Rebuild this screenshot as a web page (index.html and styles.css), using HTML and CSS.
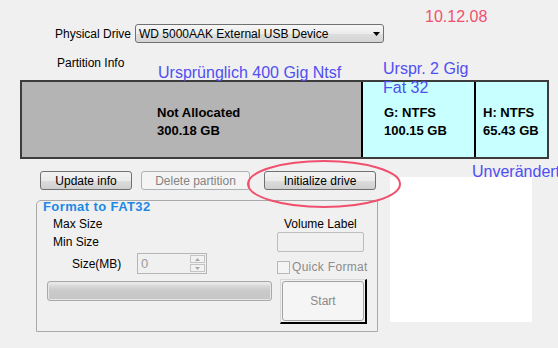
FILE: index.html
```html
<!DOCTYPE html>
<html>
<head>
<meta charset="utf-8">
<link rel="stylesheet" href="styles.css">
</head>
<body>
<div class="screen">
  <div class="dialog">
    <div class="drive-row">
      <span class="drive-label">Physical Drive</span>
      <div class="combo">
        <span class="combo-text">WD 5000AAK External USB Device</span>
        <svg class="combo-arrow" width="7" height="4" viewBox="0 0 7 4"><polygon points="0,0 7,0 3.5,4" fill="#000"/></svg>
      </div>
    </div>
    <div class="partition-label">Partition Info</div>
    <div class="partition-bar">
      <div class="cell cell-free"><div>Not Allocated</div><div>300.18 GB</div></div>
      <div class="cell cell-g"><div>G: NTFS</div><div>100.15 GB</div></div>
      <div class="cell cell-h"><div>H: NTFS</div><div>65.43 GB</div></div>
    </div>
    <div class="button-row">
      <button class="btn btn-update">Update info</button>
      <button class="btn btn-delete" disabled>Delete partition</button>
      <button class="btn btn-init">Initialize drive</button>
    </div>
    <div class="group">
      <div class="group-title">Format to FAT32</div>
      <div class="group-body">
        <div class="col-left">
          <div class="line">Max Size</div>
          <div class="line line-min">Min Size</div>
          <div class="size-row">
            <span class="size-label">Size(MB)</span>
            <div class="spinner">
              <span class="spin-value">0</span>
              <div class="spin-buttons">
                <div class="spin-btn"><svg width="5" height="3" viewBox="0 0 5 3"><polygon points="0,3 5,3 2.5,0" fill="#a8a8a8"/></svg></div>
                <div class="spin-btn"><svg width="5" height="3" viewBox="0 0 5 3"><polygon points="0,0 5,0 2.5,3" fill="#a8a8a8"/></svg></div>
              </div>
            </div>
          </div>
          <div class="progress"></div>
        </div>
        <div class="col-right">
          <div class="line vol-label">Volume Label</div>
          <div class="vol-input"></div>
          <div class="check-row">
            <span class="checkbox"></span>
            <span class="check-text">Quick Format</span>
          </div>
          <div class="start-btn"><div class="start-inner">Start</div></div>
        </div>
      </div>
    </div>
  </div>

  <div class="note note-date">10.12.08</div>
  <div class="note note-orig">Ursprünglich 400 Gig Ntsf</div>
  <div class="note note-urspr">Urspr. 2 Gig</div>
  <div class="note note-fat">Fat 32</div>
  <div class="note note-unv">Unverändert</div>
  <div class="white-box"></div>
  <svg class="ring" width="156" height="50" viewBox="0 0 156 50"><ellipse cx="78" cy="25" rx="76" ry="23" fill="none" stroke="#f0506e" stroke-width="2"/></svg>
</div>
</body>
</html>
```
FILE: styles.css
```css
* { box-sizing: border-box; }
html, body { margin: 0; padding: 0; }
body {
  background: #f0f0f0;
  font-family: "Liberation Sans", Arial, sans-serif;
  font-size: 12px;
  color: #000;
}
.screen {
  position: relative;
  width: 558px;
  height: 348px;
  overflow: hidden;
}
.dialog {
  padding-top: 24px;
}
.drive-row {
  display: flex;
  align-items: center;
  padding-left: 55px;
  height: 19px;
}
.drive-label {
  width: 80px;
  line-height: 14px;
}
.combo {
  width: 249px;
  height: 19px;
  border: 1px solid #707070;
  border-radius: 3px;
  background: linear-gradient(#f6f6f6 0%, #ececec 50%, #dedede 51%, #d4d4d4 100%);
  display: flex;
  align-items: center;
  padding-left: 3px;
  padding-right: 3px;
}
.combo-text { flex: 1; line-height: 14px; }
.combo-arrow { display: block; margin-right: 0; }
.partition-label {
  margin-top: 13px;
  padding-left: 57px;
  line-height: 14px;
  height: 14px;
}
.partition-bar {
  margin-top: 10px;
  margin-left: 20px;
  width: 529px;
  height: 79px;
  border: 2px solid #3c3c3c;
  display: grid;
  grid-template-columns: 339px 113px 1fr;
}
.cell {
  font-weight: bold;
  font-size: 13px;
  line-height: 18px;
  padding-top: 22px;
}
.cell-free { background: #b4b4b4; padding-left: 135px; }
.cell-g { background: #c8ffff; border-left: 2px solid #000; padding-left: 21px; }
.cell-h { background: #c8ffff; border-left: 2px solid #000; padding-left: 7px; }
.button-row {
  margin-top: 12px;
  padding-left: 40px;
  display: flex;
  height: 19px;
}
.btn {
  font-family: "Liberation Sans", Arial, sans-serif;
  font-size: 12px;
  height: 19px;
  padding: 0;
  border: 1px solid #707070;
  border-radius: 3px;
  background: linear-gradient(#f2f2f2 0%, #ebebeb 50%, #dddddd 51%, #cfcfcf 100%);
  color: #000;
  line-height: 16px;
}
.btn-update { width: 92px; }
.btn-delete {
  width: 109px;
  margin-left: 9px;
  border-color: #adb2b5;
  background: #f4f4f4;
  color: #838383;
}
.btn-init { width: 112px; margin-left: 14px; }
.group {
  margin-top: 10px;
  margin-left: 36px;
  width: 342px;
  height: 132px;
  border: 1px solid #a9a9a9;
  border-radius: 5px 0 0 0;
}
.group-title {
  font-weight: bold;
  font-size: 13px;
  line-height: 12px;
  height: 12px;
  color: #1e88e5;
  padding-left: 6px;
  letter-spacing: 0.4px;
}
.group-body {
  display: flex;
  margin-top: 4px;
}
.col-left { width: 240px; }
.line { line-height: 14px; height: 14px; }
.col-left > .line { padding-left: 16px; }
.line-min { margin-top: 4px; }
.size-row {
  margin-top: 4px;
  display: flex;
  align-items: center;
  height: 21px;
  padding-left: 35px;
}
.size-label { width: 65px; line-height: 14px; }
.spinner {
  width: 70px;
  height: 21px;
  border: 1px solid #b5b5b5;
  background: #f0f0f0;
  display: flex;
  align-items: center;
  padding-left: 3px;
  padding-right: 1px;
}
.spin-value { flex: 1; color: #9a9a9a; font-size: 13px; line-height: 14px; }
.spin-buttons { display: flex; flex-direction: column; gap: 1px; }
.spin-btn {
  width: 15px;
  height: 8px;
  border: 1px solid #c4c4c4;
  background: #f2f2f2;
  display: flex;
  align-items: center;
  justify-content: center;
}
.spin-btn svg { display: block; }
.progress {
  margin-top: 7px;
  margin-left: 10px;
  width: 225px;
  height: 20px;
  border: 1px solid #a9a9a9;
  border-radius: 3px;
  background: linear-gradient(#f4f4f4 0%, #dadada 20%, #cbcbcb 45%, #c6c6c6 100%);
  box-shadow: inset 0 0 0 1px #e6e6e6;
}
.col-right { width: 92px; }
.vol-label { padding-left: 7px; }
.vol-input {
  margin-top: 1px;
  width: 87px;
  height: 20px;
  border: 1px solid #bdbdbd;
  border-radius: 2px;
  background: #f0f0f0;
}
.check-row {
  margin-top: 8px;
  display: flex;
  align-items: center;
  height: 14px;
}
.checkbox {
  width: 13px;
  height: 13px;
  border: 1px solid #b8b8b8;
  background: #f4f4f4;
}
.check-text {
  margin-left: 2px;
  color: #8c8c8c;
  line-height: 14px;
  letter-spacing: 0.3px;
}
.start-btn {
  margin-top: 5px;
  margin-left: 3px;
  width: 87px;
  height: 45px;
  border-top: 1px solid #d8d8d8;
  border-left: 1px solid #d8d8d8;
  border-right: 2px solid #000;
  border-bottom: 2px solid #000;
  padding: 1px;
}
.start-inner {
  height: 100%;
  border: 1px solid #a3a3a3;
  border-radius: 3px;
  background: #f5f5f5;
  color: #8a8a8a;
  display: flex;
  align-items: center;
  justify-content: center;
  font-size: 12px;
}
.note {
  position: absolute;
  font-size: 16px;
  line-height: 18px;
  white-space: nowrap;
  color: #4f4ff0;
}
.note-date { left: 425px; top: 8px; color: #f0506e; }
.note-orig { left: 158px; top: 64px; }
.note-urspr { left: 383px; top: 60px; }
.note-fat { left: 383px; top: 79px; }
.note-unv { left: 472px; top: 163px; }
.white-box {
  position: absolute;
  left: 390px;
  top: 177px;
  width: 142px;
  height: 145px;
  background: #fff;
}
.ring {
  position: absolute;
  left: 246px;
  top: 159px;
}
```
